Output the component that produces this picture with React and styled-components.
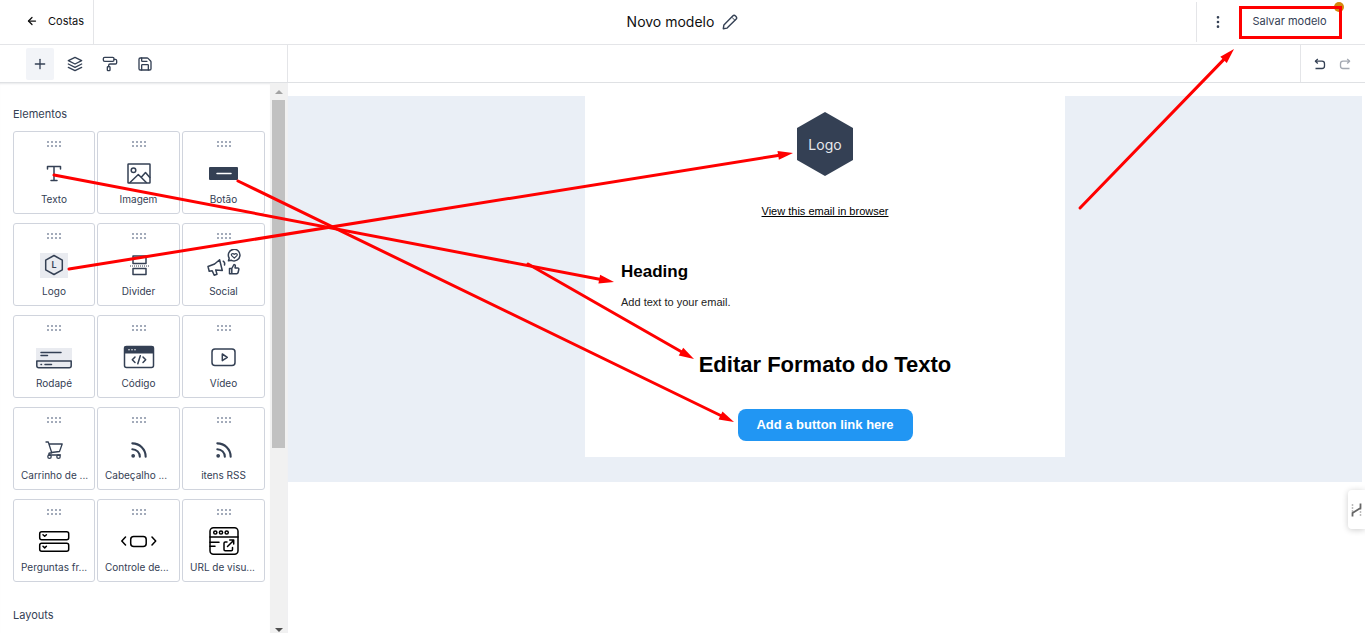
import React from "react";
import styled, { createGlobalStyle } from "styled-components";
import {
  FiArrowLeft,
  FiLayers,
  FiMoreVertical,
  FiPlus,
  FiRss,
} from "react-icons/fi";
import { PaintRoller, Save } from "lucide-react";

const GlobalStyle = createGlobalStyle`
  *,
  *::before,
  *::after {
    box-sizing: border-box;
  }
  :root {
    --ink: #344054;
    --line: #e4e5e8;
    --canvas: #eaeff6;
    --blue: #2196f3;
    --red: #ff0000;
  }
  body {
    margin: 0;
    background: #fff;
    color: var(--ink);
    font-family: Inter, "Liberation Sans", sans-serif;
    overflow: hidden;
  }
  button {
    font: inherit;
    color: inherit;
    border: 0;
    padding: 0;
    background: none;
    cursor: pointer;
  }
`;

const Page = styled.div`
  position: relative;
  display: flex;
  flex-direction: column;
  height: 100vh;
`;

const Header = styled.header`
  display: grid;
  grid-template-columns: 1fr auto 1fr;
  align-items: center;
  height: 45px;
  border-bottom: 1px solid var(--line);
`;

const BackLink = styled.a`
  display: flex;
  align-items: center;
  gap: 10px;
  width: 94px;
  height: 44px;
  padding-left: 26px;
  padding-bottom: 2px;
  border-right: 1px solid var(--line);
  color: #101010;
  font-size: 11px;
  text-decoration: none;
`;

const TitleBox = styled.div`
  display: flex;
  align-items: center;
  gap: 8px;
`;

const Title = styled.h1`
  margin: 0;
  color: #101010;
  font-size: 14px;
  line-height: 20px;
  font-weight: 400;
`;

const HeaderActions = styled.div`
  display: flex;
  align-items: center;
  justify-self: end;
  height: 40px;
  padding-left: 13px;
  padding-right: 23px;
  gap: 13px;
  border-left: 1px solid var(--line);
`;

const IconButton = styled.button`
  display: flex;
  align-items: center;
  justify-content: center;
  width: 16px;
  height: 16px;
  opacity: ${({ disabled }) => (disabled ? 0.45 : 1)};
`;

const SaveBox = styled.div`
  position: relative;
`;

const SaveButton = styled.button`
  position: relative;
  display: flex;
  align-items: center;
  justify-content: center;
  width: 103px;
  height: 33px;
  padding: 0 2px 3px 0;
  border: 3px solid var(--red);
  font-size: 11px;
`;

const StatusDot = styled.span`
  position: absolute;
  top: -4px;
  right: -2px;
  width: 10px;
  height: 10px;
  border-radius: 50%;
  background: #d4880b;
`;

const Toolbar = styled.div`
  display: flex;
  height: 38px;
  border-bottom: 1px solid #dfe1e4;
`;

const Tabs = styled.nav`
  display: flex;
  align-items: center;
  gap: 7px;
  width: 288px;
  padding-left: 26px;
  border-right: 1px solid var(--line);
`;

const Tab = styled.button`
  display: flex;
  align-items: center;
  justify-content: center;
  width: 28px;
  height: 32px;
  border-radius: 2px;
  background: ${({ $active }) => ($active ? "#f2f4f8" : "transparent")};
`;

const History = styled.div`
  display: flex;
  align-items: center;
  gap: 9px;
  margin-left: auto;
  width: 65px;
  padding-left: 11px;
  border-left: 1px solid var(--line);
`;

const Main = styled.div`
  display: flex;
  flex: 1;
  min-height: 0;
`;

const Sidebar = styled.aside`
  display: flex;
  flex-shrink: 0;
  width: 288px;
  border-right: 1px solid #f0f0f2;
`;

const Panel = styled.div`
  flex: 1;
  padding: 22px 5px 0 13px;
  overflow: hidden;
  box-shadow: inset 0 2px 2px -1px #e8e9eb;
`;

const SectionTitle = styled.h2`
  margin: 0 0 8px;
  font-size: 11px;
  line-height: 18px;
  font-weight: 400;
`;

const CardGrid = styled.div`
  display: grid;
  grid-template-columns: 82fr 83fr 83fr;
  column-gap: 2px;
  row-gap: 9px;
  margin-bottom: 24px;
`;

const Card = styled.button`
  display: flex;
  flex-direction: column;
  align-items: center;
  min-width: 0;
  height: 83px;
  padding-top: 8px;
  border: 1px solid #d0d4dd;
  border-radius: 3px;
  background: #fff;
`;

const DragDots = styled.span`
  width: 16px;
  height: 8px;
  margin-bottom: 9px;
  background-image: radial-gradient(circle, #a3abba 1px, transparent 1px);
  background-size: 4px 4px;
`;

const CardIcon = styled.svg`
  display: block;
  width: 36px;
  height: 32px;
  flex-shrink: 0;
  fill: none;
  stroke: ${({ $dark }) => ($dark ? "#000" : "var(--ink)")};
  stroke-width: 1.5;
  stroke-linecap: round;
  stroke-linejoin: round;
`;

const CardLabel = styled.span`
  margin-top: 3px;
  font-size: 10px;
  line-height: 14px;
  white-space: nowrap;
  ${({ $cut }) => $cut && "align-self: flex-start; margin-left: 7px;"}
`;

const Scrollbar = styled.div`
  display: flex;
  flex-direction: column;
  align-items: center;
  justify-content: space-between;
  width: 17px;
  padding: 7px 0 1px;
  background: #f1f1f1;
`;

const ScrollArrow = styled.span`
  border: 4px solid transparent;
  ${({ $up }) =>
    $up
      ? "border-top: 0; border-bottom-color: #a3a3a3;"
      : "border-bottom: 0; border-top-color: #505050;"}
`;

const ScrollTrack = styled.div`
  flex: 1;
  width: 13px;
  padding-top: 6px;
`;

const ScrollThumb = styled.div`
  height: 66%;
  background: #c1c1c1;
`;

const Workspace = styled.main`
  flex: 1;
  padding: 13px 3px 0 0;
`;

const Canvas = styled.div`
  padding-bottom: 25px;
  background: var(--canvas);
`;

const Email = styled.article`
  display: flex;
  flex-direction: column;
  align-items: center;
  width: 480px;
  max-width: 100%;
  margin: 0 auto;
  padding: 16px 36px;
  background: #fff;
  color: #000;
  font-family: "Liberation Sans", Arial, sans-serif;
`;

const LogoBadge = styled.div`
  display: flex;
  align-items: center;
  justify-content: center;
  width: 56px;
  height: 64px;
  clip-path: polygon(50% 0, 100% 25%, 100% 75%, 50% 100%, 0 75%, 0 25%);
  background: var(--ink);
  color: #e6e8ec;
  font-family: Inter, sans-serif;
  font-size: 14px;
`;

const BrowserLink = styled.a`
  margin-top: 27px;
  color: #000;
  font-size: 11px;
  line-height: 16px;
`;

const TextBlock = styled.section`
  align-self: stretch;
  margin-top: 41px;
`;

const Heading = styled.h2`
  margin: 0;
  font-size: 17px;
  line-height: 24px;
`;

const Paragraph = styled.p`
  margin: 10px 0 0;
  color: #222;
  font-size: 11px;
  line-height: 16px;
`;

const BigHeading = styled.h2`
  margin: 39px 0 0;
  font-size: 22px;
  line-height: 32px;
`;

const CallToAction = styled.button`
  margin-top: 28px;
  width: 175px;
  height: 32px;
  padding-bottom: 2px;
  border-radius: 8px;
  background: var(--blue);
  color: #fff;
  font-size: 13px;
  font-weight: 700;
`;

const HelpTab = styled.button`
  position: absolute;
  right: 0;
  top: 490px;
  display: flex;
  align-items: center;
  justify-content: center;
  width: 17px;
  height: 39px;
  border-radius: 4px 0 0 4px;
  background: #fff;
  box-shadow: 0 1px 6px rgba(0, 0, 0, 0.2);
`;

const Annotations = styled.svg`
  position: absolute;
  top: 0;
  ${({ $side }) => $side}: 0;
  pointer-events: none;
  stroke: var(--red);
  stroke-width: 3;
  stroke-linecap: round;
`;

const PencilIcon = () => (
  <svg width="16" height="16" viewBox="0 0 16 16" fill="none" stroke="#344054" strokeWidth="1.4" strokeLinejoin="round">
    <path d="M1.3 14.7l.6-3.8L10.7 2a2 2 0 0 1 2.8 0l.5.5a2 2 0 0 1 0 2.8L5.1 14.1z" />
    <path d="M9.8 3.2l3 3" strokeWidth="1" />
  </svg>
);

const TurnIcon = ({ flip }) => (
  <svg width="16" height="16" viewBox="0 0 16 16" fill="none" stroke="#344054" strokeWidth="1.3" strokeLinejoin="round">
    <g transform={flip ? "matrix(-1 0 0 1 16 0)" : undefined}>
      <path d="M5.8 3L3.4 5.2l2.4 2.300" />
      <path d="M3.400 5.200h6.600a2.500 2.500 0 0 1 2.500 2.500v2.300a2.500 2.500 0 0 1-2.500 2.500H3.500" />
    </g>
  </svg>
);

const elements = [
  {
    label: "Texto",
    icon: <path d="M11.5 12V9.5h13V12M18 9.5v14M15 23.5h6" />,
  },
  {
    label: "Imagem",
    icon: (
      <>
        <rect x="7" y="7" width="22" height="19" rx="0.5" />
        <circle cx="12.5" cy="13.3" r="2.3" />
        <path d="M9 25.5l8.3-8 8 8M20.5 20l4-4.5 4.3 5" />
      </>
    ),
  },
  {
    label: "Botão",
    icon: (
      <>
        <rect x="3" y="10" width="29" height="13" rx="1" fill="#344054" stroke="none" />
        <path d="M11 16.5h14" stroke="#fff" />
      </>
    ),
  },
  {
    label: "Logo",
    icon: (
      <>
        <rect x="4" y="4" width="28" height="25" fill="#e9ebf0" stroke="none" />
        <path d="M18 6.5l8.3 4.7v9.6L18 25.5l-8.3-4.7v-9.6z" />
        <text x="15.6" y="19.3" fontSize="9" fontWeight="600" fill="#344054" stroke="none">
          L
        </text>
      </>
    ),
  },
  {
    label: "Divider",
    icon: (
      <>
        <path d="M12 7v7.5h13V7zM12 19.5h13v6H12z" />
        <path d="M9 17h19" strokeWidth="1" strokeDasharray="1 1" strokeLinecap="butt" />
      </>
    ),
  },
  {
    label: "Social",
    icon: (
      <>
        <path d="M2 17.5l1.2 4.8 3-.5 2 4.4 2.8-1-1.3-4.3 6.6.6-2.7-10.7-5 4.2z" />
        <path d="M17.2 12.2c1.3.8 1.800 2.200 1.300 3.800" />
        <path d="M22.5 11.8l.7-2.7a5.8 5.8 0 1 1 2.4 2.2z" />
        <path d="M28.3 9.2l-2.6-2.6c-1.2-1.6 1.2-3 2.6-1.2 1.4-1.8 3.8-.4 2.6 1.2z" strokeWidth="1.2" />
        <path d="M23.5 19.5h2.3v5.2h-2.3zM25.8 19.5l2.2-4c1.6 0 1.6 1.3 1 3.4h2.6c1 0 1.4.7 1.2 1.6l-.7 3c-.2.8-.7 1.2-1.5 1.2h-4.8" />
      </>
    ),
  },
  {
    label: "Rodapé",
    icon: (
      <>
        <path d="M0 7h36v13H0z" fill="#e9ebf0" stroke="none" />
        <path d="M5 11.5h20M5 14.5h6.5" />
        <path d="M.8 20h34.4v4.7a2 2 0 0 1-2 2H2.8a2 2 0 0 1-2-2z" fill="#e9ebf0" />
        <path d="M5 23.5h.5M9 23.5h6.5" />
      </>
    ),
  },
  {
    label: "Código",
    icon: (
      <>
        <rect x="3.5" y="5.5" width="29" height="21" rx="2" />
        <path d="M3 12.5V7a2 2 0 0 1 2-2h26a2 2 0 0 1 2 2v5.5z" fill="#344054" stroke="none" />
        <path d="M8 8.7h.01M11 8.7h.01M14 8.7h.01" stroke="#fff" />
        <path d="M14 16l-2.7 2.8L14 21.5M22 16l2.7 2.8L22 21.5M19.3 14.8l-2.5 8" />
      </>
    ),
  },
  {
    label: "Vídeo",
    icon: (
      <>
        <rect x="6" y="8" width="23" height="16.5" rx="3" />
        <path d="M16.3 13l5 3.3-5 3.3z" />
      </>
    ),
  },
  {
    label: "Carrinho de ...",
    cut: true,
    icon: (
      <g strokeWidth="1.3">
        <path d="M10 9h2.3l3.5 11M12.8 11h13.4l-2.7 7.5-8.2 1M15.8 20h-2c-1.4.3-1.3 2 0 2h10.7" />
        <circle cx="13.5" cy="23.7" r="1.7" />
        <circle cx="22.5" cy="23.7" r="1.7" />
      </g>
    ),
  },
  {
    label: "Cabeçalho ...",
    cut: true,
    icon: <FiRss x="8" y="7" size={20} strokeWidth="2.5" />,
  },
  {
    label: "itens RSS",
    icon: <FiRss x="8" y="7" size={20} strokeWidth="2.5" />,
  },
  {
    label: "Perguntas fr...",
    cut: true,
    dark: true,
    icon: (
      <>
        <rect x="3.7" y="6.7" width="29" height="8" rx="2" />
        <rect x="3.7" y="18.3" width="29" height="8" rx="2" />
        <path d="M7 9.7l1.7 1.6 1.7-1.6M7 21.3l1.7 1.6 1.7-1.6" />
      </>
    ),
  },
  {
    label: "Controle de...",
    cut: true,
    dark: true,
    icon: (
      <>
        <path d="M4.5 12L.8 16l3.7 4M31 12l3.700 4-3.700 4" />
        <rect x="9.7" y="11.500" width="15.500" height="10" rx="3" />
      </>
    ),
  },
  {
    label: "URL de visu...",
    cut: true,
    dark: true,
    icon: (
      <>
        <rect x="4" y="2.7" width="28" height="26.5" rx="3.5" />
        <path d="M4 12h28M4 17.3h9M4 21.3h5" />
        <circle cx="9.3" cy="7.5" r="1.6" />
        <circle cx="15" cy="7.5" r="1.6" />
        <circle cx="20.7" cy="7.5" r="1.6" />
        <path d="M21 17h-1.8c-.8 0-1.2.4-1.2 1.2v6.3c0 .8.4 1.2 1.2 1.2h6.1c.8 0 1.2-.4 1.2-1.2v-2M21.5 21.5l6-6M23.7 15h4v4" />
      </>
    ),
  },
];

const ElementCard = ({ label, icon, dark, cut }) => (
  <Card type="button">
    <DragDots />
    <CardIcon viewBox="0 0 36 32" $dark={dark} aria-hidden="true">
      {icon}
    </CardIcon>
    <CardLabel $cut={cut}>{label}</CardLabel>
  </Card>
);

const Arrow = ({ from, to }) => {
  const [x1, y1] = from;
  const [x2, y2] = to;
  const angle = (Math.atan2(y2 - y1, x2 - x1) * 180) / Math.PI;
  const length = Math.hypot(x2 - x1, y2 - y1);
  return (
    <g transform={`translate(${x2} ${y2}) rotate(${angle})`}>
      <path d={`M${-length} 0H-12`} />
      <path d="M0 0L-15 4.5V-4.5z" fill="#ff0000" stroke="none" />
    </g>
  );
};

const App = () => {
  return (
    <>
      <GlobalStyle />
      <Page>
        <Header>
          <BackLink href="#">
            <FiArrowLeft size={12} strokeWidth="2.5" />
            Costas
          </BackLink>
          <TitleBox>
            <Title>Novo modelo</Title>
            <IconButton type="button" aria-label="Renomear">
              <PencilIcon />
            </IconButton>
          </TitleBox>
          <HeaderActions>
            <IconButton type="button" aria-label="Mais opções">
              <FiMoreVertical size={16} />
            </IconButton>
            <SaveBox>
              <StatusDot />
              <SaveButton type="button">Salvar modelo</SaveButton>
            </SaveBox>
          </HeaderActions>
        </Header>

        <Toolbar>
          <Tabs>
            <Tab type="button" $active aria-label="Adicionar">
              <FiPlus size={16} />
            </Tab>
            <Tab type="button" aria-label="Camadas">
              <FiLayers size={16} />
            </Tab>
            <Tab type="button" aria-label="Estilos">
              <PaintRoller size={16} />
            </Tab>
            <Tab type="button" aria-label="Salvos">
              <Save size={16} />
            </Tab>
          </Tabs>
          <History>
            <IconButton type="button" aria-label="Desfazer">
              <TurnIcon />
            </IconButton>
            <IconButton type="button" aria-label="Refazer" disabled>
              <TurnIcon flip />
            </IconButton>
          </History>
        </Toolbar>

        <Main>
          <Sidebar>
            <Panel>
              <SectionTitle>Elementos</SectionTitle>
              <CardGrid>
                {elements.map((element) => (
                  <ElementCard key={element.label} {...element} />
                ))}
              </CardGrid>
              <SectionTitle>Layouts</SectionTitle>
            </Panel>
            <Scrollbar>
              <ScrollArrow $up />
              <ScrollTrack>
                <ScrollThumb />
              </ScrollTrack>
              <ScrollArrow />
            </Scrollbar>
          </Sidebar>

          <Workspace>
            <Canvas>
              <Email>
                <LogoBadge>Logo</LogoBadge>
                <BrowserLink href="#">View this email in browser</BrowserLink>
                <TextBlock>
                  <Heading>Heading</Heading>
                  <Paragraph>Add text to your email.</Paragraph>
                </TextBlock>
                <BigHeading>Editar Formato do Texto</BigHeading>
                <CallToAction type="button">Add a button link here</CallToAction>
              </Email>
            </Canvas>
          </Workspace>
        </Main>

        <HelpTab type="button" aria-label="Ajuda">
          <svg width="11" height="14" viewBox="0 0 11 14" fill="none" stroke="#666">
            <path d="M1.5 1v8M9.5 5v8" strokeDasharray="2 1" strokeWidth="1.5" stroke="#bbb" />
            <path d="M1.5 13.500V10l8-5V0.500" strokeWidth="1.800" />
          </svg>
        </HelpTab>

        <Annotations $side="left" width="800" height="440" aria-hidden="true">
          <Arrow from={[54, 175]} to={[614, 282]} />
          <Arrow from={[528, 264]} to={[694, 359]} />
          <Arrow from={[238, 181]} to={[734, 422]} />
          <Arrow from={[69, 269]} to={[793, 153]} />
        </Annotations>
        <Annotations $side="right" width="300" height="220" aria-hidden="true">
          <Arrow from={[15, 208]} to={[169, 49]} />
        </Annotations>
      </Page>
    </>
  );
};

export default App;
